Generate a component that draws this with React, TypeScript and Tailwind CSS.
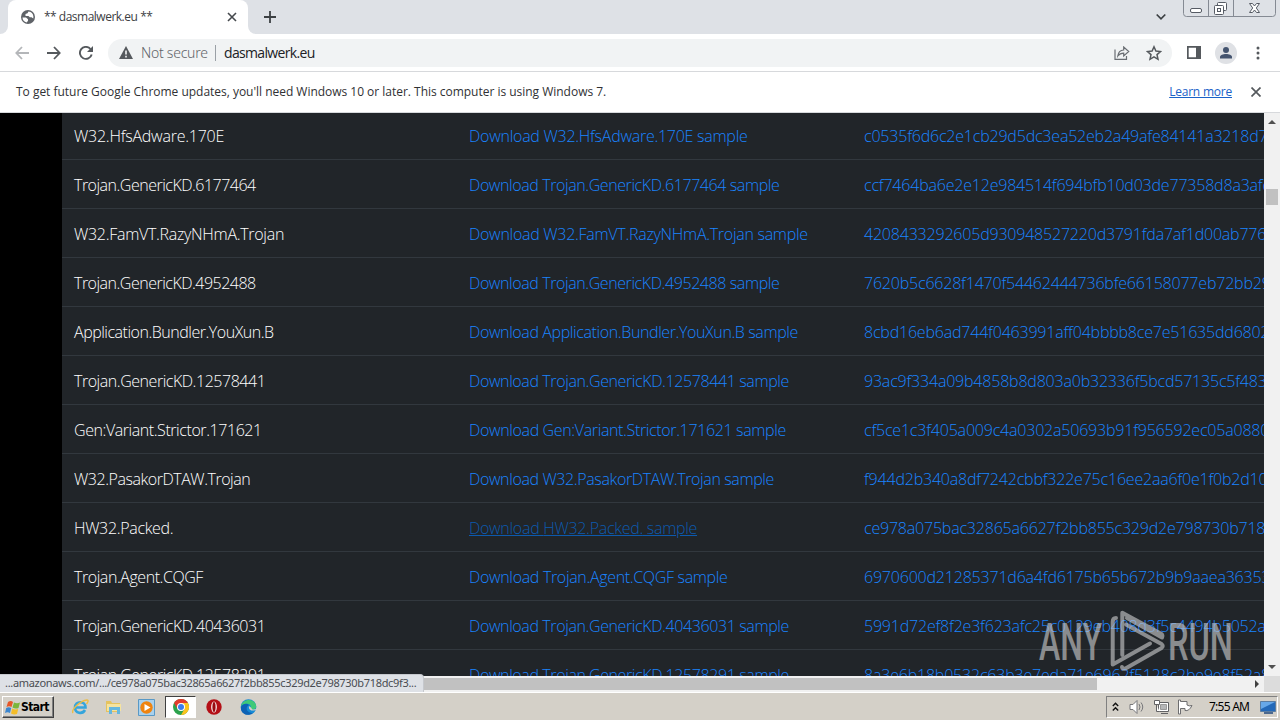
import React from "react";

type Row = { name: string; hash: string; nameTracking: string; linkTracking: string; hovered?: boolean };

const rows: Row[] = [
  { name: "W32.HfsAdware.170E", hash: "c0535f6d6c2e1cb29d5dc3ea52eb2a49afe84141a3218d7", nameTracking: "tracking-[-0.24px]", linkTracking: "tracking-[-0.26px]" },
  { name: "Trojan.GenericKD.6177464", hash: "ccf7464ba6e2e12e984514f694bfb10d03de77358d8a3afc", nameTracking: "tracking-[-0.5px]", linkTracking: "tracking-[-0.41px]" },
  { name: "W32.FamVT.RazyNHmA.Trojan", hash: "4208433292605d930948527220d3791fda7af1d00ab776", nameTracking: "tracking-[-0.29px]", linkTracking: "tracking-[-0.28px]" },
  { name: "Trojan.GenericKD.4952488", hash: "7620b5c6628f1470f54462444736bfe66158077eb72bb29", nameTracking: "tracking-[-0.5px]", linkTracking: "tracking-[-0.41px]" },
  { name: "Application.Bundler.YouXun.B", hash: "8cbd16eb6ad744f0463991aff04bbbb8ce7e51635dd6802", nameTracking: "tracking-[-0.48px]", linkTracking: "tracking-[-0.39px]" },
  { name: "Trojan.GenericKD.12578441", hash: "93ac9f334a09b4858b8d803a0b32336f5bcd57135c5f483", nameTracking: "tracking-[-0.46px]", linkTracking: "tracking-[-0.39px]" },
  { name: "Gen:Variant.Strictor.171621", hash: "cf5ce1c3f405a009c4a0302a50693b91f956592ec05a0880", nameTracking: "tracking-[-0.43px]", linkTracking: "tracking-[-0.36px]" },
  { name: "W32.PasakorDTAW.Trojan", hash: "f944d2b340a8df7242cbbf322e75c16ee2aa6f0e1f0b2d10", nameTracking: "tracking-[-0.46px]", linkTracking: "tracking-[-0.38px]" },
  { name: "HW32.Packed.", hash: "ce978a075bac32865a6627f2bb855c329d2e798730b718", nameTracking: "tracking-[-0.33px]", linkTracking: "tracking-[-0.29px]", hovered: true },
  { name: "Trojan.Agent.CQGF", hash: "6970600d21285371d6a4fd6175b65b672b9b9aaea36353", nameTracking: "tracking-[-0.44px]", linkTracking: "tracking-[-0.33px]" },
  { name: "Trojan.GenericKD.40436031", hash: "5991d72ef8f2e3f623afc25c0129eb408d3f5c4494b5052a", nameTracking: "tracking-[-0.46px]", linkTracking: "tracking-[-0.39px]" },
  { name: "Trojan.GenericKD.12578291", hash: "8a3e6b18b0532c63b3e7eda71e6962f5128c2be9e8f52a8", nameTracking: "tracking-[-0.46px]", linkTracking: "tracking-[-0.39px]" },
];

function TabStrip() {
  return (
    <div className="relative flex h-[34px] shrink-0 bg-[#dee1e6]">
      <div className="flex w-2 items-end bg-white">
        <div className="h-full w-full rounded-br-lg bg-[#dee1e6]" />
      </div>
      <div className="flex w-60 items-center rounded-t-lg bg-white pl-[13px]">
        <svg width="14" height="14" viewBox="0 0 14 14">
          <circle cx="7" cy="7" r="7" fill="#5f6368" />
          <path d="M1.5 7.5H5l2 1.7v1.5l-1.3 1.8C3.2 12 1.5 10 1.5 7.5ZM7.5 1.4l-1 1.8-2 .7V6h3l1.3 1.3h1.7l1.8 1.2c.6-2.8-.7-5.3-2.8-6.4Z" fill="#fff" />
        </svg>
        <span className="ml-[9px] flex w-[183px] gap-[3px] font-['Open_Sans','Noto_Sans',sans-serif] text-[12px] text-[#3c4043]">
          <span className="tracking-[-0.7px]">**</span>
          <span className="tracking-[-0.5px]">dasmalwerk.eu</span>
          <span className="tracking-[-0.7px]">**</span>
        </span>
        <svg width="10" height="10" viewBox="0 0 10 10" stroke="#45494d" strokeWidth="1.6">
          <path d="m1 1 8 8M9 1 1 9" />
        </svg>
      </div>
      <div className="flex w-2 bg-white">
        <div className="h-full w-full rounded-bl-lg bg-[#dee1e6]" />
      </div>
      <svg className="ml-2 mt-[11px]" width="12" height="12" viewBox="0 0 12 12" stroke="#3c4043" strokeWidth="1.8">
        <path d="M6 0v12M0 6h12" />
      </svg>
      <svg className="ml-auto mt-[13px] mr-[17px]" width="10" height="8" viewBox="0 0 10 8" fill="none" stroke="#3c4043" strokeWidth="1.7">
        <path d="m.7 1.5 4.3 4.3 4.3-4.3" />
      </svg>
      <svg className="mr-1" width="93" height="17" viewBox="0 0 93 17" fill="none">
        <path d="M.5 0v13.5a3 3 0 0 0 3 3h86a3 3 0 0 0 3-3V0M25.500 0v16.500M50.500 0v16.500" stroke="#858a93" />
        <rect x="7.500" y="8.500" width="11" height="4" rx="1.500" fill="#fff" stroke="#565b64" />
        <g stroke="#565b64">
          <rect x="34.500" y="2.500" width="9" height="8" rx="1" fill="#fff" />
          <rect x="31.500" y="5.500" width="9" height="9" rx="1" fill="#fff" />
          <rect x="34.500" y="8.500" width="3" height="3" />
        </g>
        <path d="M66.500 3.500h3l2 2.500 2-2.500h3L73.300 8l3.200 4.500h-3l-2-2.500-2 2.500h-3L69.700 8Z" fill="#fff" stroke="#565b64" />
      </svg>
    </div>
  );
}

function Toolbar() {
  return (
    <div className="flex h-[38px] shrink-0 items-center border-b border-[#d7d9dc] bg-white">
      <svg className="ml-[15px]" width="14" height="14" viewBox="0 0 14 14" fill="none" stroke="#b4b6b9" strokeWidth="1.8">
        <path d="M14 7H1.500M7 1 1.300 7 7 13" />
      </svg>
      <svg className="ml-[18px]" width="14" height="14" viewBox="0 0 14 14" fill="none" stroke="#55595d" strokeWidth="1.8">
        <path d="M0 7h12.500M7 1l5.700 6L7 13" />
      </svg>
      <svg className="ml-[18px]" width="14" height="14" viewBox="0 0 14 14" fill="none" stroke="#55595d" strokeWidth="1.900">
        <path d="M12.700 8.500A6 6 0 1 1 11.500 3" />
        <path d="M14 0v6H8l2.200-2.200Z" fill="#55595d" stroke="none" />
      </svg>
      <div className="ml-[15px] flex h-7 w-[1064px] items-center rounded-full bg-[#f1f3f4] pl-[11px]">
        <svg width="14" height="13" viewBox="0 0 14 13">
          <path d="M7 0 14 13H0Z" fill="#55595d" />
          <path d="M7 4.500v4M7 9.800v1.600" stroke="#fff" strokeWidth="1.500" />
        </svg>
        <span className="ml-2 w-[74px] whitespace-nowrap text-[14px] font-light tracking-[-0.25px] text-[#5f6368]">Not secure</span>
        <span className="h-4 w-px bg-[#9aa0a6]" />
        <span className="ml-2 font-['Open_Sans','Noto_Sans',sans-serif] text-[14px] tracking-[-0.66px] text-[#202124]">dasmalwerk.eu</span>
        <svg className="ml-auto" width="16" height="14" viewBox="0 0 16 14" fill="none" stroke="#6a6e73" strokeWidth="1.200">
          <path d="M1 3.500v9.800h11.500V10" />
          <path d="M3.800 10C4.200 6.500 6 4.200 9.700 4V1l5 4.500-5 4.500V7.200C7 7.200 5.300 8 3.800 10Z" />
        </svg>
        <svg className="ml-4 mr-[10px]" width="16" height="16" viewBox="0 0 16 16" fill="none" stroke="#55595d" strokeWidth="1.500">
          <path d="m8 1.800 1.900 4.300 4.600.4L11 9.600l1 4.700-4-2.500-4 2.500 1-4.700-3.500-3.100 4.600-.4Z" />
        </svg>
      </div>
      <svg className="ml-[15px]" width="14" height="13" viewBox="0 0 14 13">
        <path d="M0 0h14v13H0ZM1.700 1.700v9.600H9V1.700Z" fill="#55595d" fillRule="evenodd" />
      </svg>
      <svg className="ml-[14px]" width="22" height="22" viewBox="0 0 22 22">
        <circle cx="11" cy="11" r="11" fill="#dfe1e5" />
        <circle cx="11" cy="8" r="3" fill="#44546f" />
        <path d="M5 16.500V15c0-2 3-3 6-3s6 1 6 3v1.500Z" fill="#44546f" />
      </svg>
      <svg className="ml-[19px]" width="4" height="14" viewBox="0 0 4 14" fill="#55595d">
        <circle cx="2" cy="2" r="1.500" />
        <circle cx="2" cy="7" r="1.500" />
        <circle cx="2" cy="12" r="1.500" />
      </svg>
    </div>
  );
}

function InfoBar() {
  return (
    <div className="flex h-[41px] shrink-0 items-center border-b border-[#d7d9dc] bg-white pl-4 pr-[19px] font-['Open_Sans','Noto_Sans',sans-serif] text-[12px] text-[#303134]">
      <span className="tracking-[-0.02px]">To get future Google Chrome updates, you'll need Windows 10 or later. This computer is using Windows 7.</span>
      <span className="ml-auto tracking-[-0.22px] text-[#1a62c8] underline">Learn more</span>
      <svg className="ml-[19px]" width="10" height="10" viewBox="0 0 10 10" stroke="#55595d" strokeWidth="1.700">
        <path d="m.5.5 9 9M9.500.5l-9 9" />
      </svg>
    </div>
  );
}

function SampleTable() {
  return (
    <div className="flex min-w-0 flex-1 overflow-hidden bg-black pl-[62px]">
      <div className="-mt-0.5 min-w-0 flex-1">
        {rows.map((row) => (
          <div
            key={row.name}
            className="grid h-[49px] grid-cols-[395px_395px_1fr] items-center whitespace-nowrap border-b border-[#32383e] bg-[#212529] pt-px font-['Open_Sans','Noto_Sans',sans-serif] text-[16px] font-light"
          >
            <span className={`pl-3 text-white ${row.nameTracking}`}>{row.name}</span>
            <span className={`pl-3 ${row.linkTracking} ${row.hovered ? "text-[#0c5aae] underline" : "text-[#1a84ff]"}`}>
              Download {row.name} sample
            </span>
            <span className="overflow-hidden pl-3 tracking-[-0.2px] text-[#1a84ff]">{row.hash}</span>
          </div>
        ))}
      </div>
    </div>
  );
}

function VerticalScrollbar() {
  return (
    <div className="flex w-4 flex-col items-center bg-[#f1f1f1]">
      <svg className="mt-[7px]" width="8" height="4" viewBox="0 0 8 4"><path d="M4 0 8 4H0Z" fill="#505050" /></svg>
      <div className="mt-[65px] h-4 w-3 bg-[#c1c1c1]" />
      <svg className="mt-auto mb-[7px]" width="8" height="4" viewBox="0 0 8 4"><path d="M0 0h8L4 4Z" fill="#505050" /></svg>
    </div>
  );
}

function Watermark() {
  return (
    <svg className="absolute left-[1036px] top-[606px] opacity-65" width="200" height="70" viewBox="0 0 200 70" fill="none">
      <g fill="#c2c3c4" fontFamily="Roboto, sans-serif" fontSize="51" fontWeight="500">
        <text x="3" y="53.500" textLength="63" lengthAdjust="spacingAndGlyphs">ANY</text>
        <text x="132" y="53.500" textLength="65" lengthAdjust="spacingAndGlyphs">RUN</text>
      </g>
      <g stroke="#c2c3c4" strokeWidth="4" strokeLinecap="round" strokeLinejoin="round">
        <path d="M80 12q-3.300 0-3.300 4v42.500L114 37.500" />
        <path d="M86.300 49V6.700L125.500 28q1.500 1.500.5 3.500L91 12" />
        <path d="M90 18.500 125.500 38q2.500 2 0 4L89.500 62.500q-3 1-3.500-1.500" />
      </g>
    </svg>
  );
}

function QuickLaunch() {
  return (
    <div className="flex items-center">
      <svg width="18" height="18" viewBox="0 0 18 18" fill="none">
        <path d="M4 9.500h10.500c0-7-10.500-7-10.500 0 0 6 7.500 7 10 2.500" stroke="#35a5dc" strokeWidth="2.600" />
        <path d="M2 15C0 12 9 2.500 16 2c2 0 .8 2.500-.5 4" stroke="#edbd43" strokeWidth="1.400" />
      </svg>
      <svg className="ml-4" width="18" height="18" viewBox="0 0 18 18">
        <path d="M1 3h5l1 2h8v9H1Z" fill="#e5c35f" />
        <path d="M2 6h14v7H2Z" fill="#f5e39f" />
        <path d="M4 16V9h11v7h-3v-4H7v4Z" fill="#65b7df" />
      </svg>
      <svg className="ml-[15px]" width="17" height="17" viewBox="0 0 17 17">
        <path d="M.5.500h16v16H.500Z" fill="#a9d1ed" stroke="#5999c6" />
        <circle cx="8.500" cy="8.500" r="6.200" fill="#ef8410" />
        <path d="m6.500 5 6 3.500-6 3.500Z" fill="#fff" />
      </svg>
      <div className="ml-[10px] flex h-[22px] w-[31px] items-center justify-center border border-b-white border-l-[#404040] border-r-white border-t-[#404040] bg-white">
        <svg width="16" height="16" viewBox="0 0 16 16">
          <circle cx="8" cy="8" r="8" fill="#2ba24c" />
          <path d="M1.070 4A8 8 0 0 1 14.930 4H8L4.540 10Z" fill="#e33b2e" />
          <path d="M14.930 4A8 8 0 0 1 8 16l3.460-6L8 4Z" fill="#fcc31e" />
          <circle cx="8" cy="8" r="4" fill="#fff" />
          <circle cx="8" cy="8" r="3" fill="#3b7ded" />
        </svg>
      </div>
      <svg className="ml-[10px]" width="16" height="16" viewBox="0 0 16 16">
        <circle cx="8" cy="8" r="7.700" fill="#b40f16" />
        <ellipse cx="8" cy="8" rx="2.800" ry="5.600" fill="#fff" />
        <ellipse cx="8" cy="8" rx="1.600" ry="5" fill="#98090f" />
      </svg>
      <svg className="ml-[18px]" width="17" height="16" viewBox="0 0 17 16">
        <circle cx="8.500" cy="8" r="7.800" fill="#158ad5" />
        <path d="M1 7C3-1 15-1 16.200 7c.3 4-5 4.500-5.700 2.500C12 5 7 3 1 7Z" fill="#3fc978" />
        <path d="M1 8c2-4 6-4 8-2-4 2-3 8 4 8C8 18 0 15 1 8Z" fill="#0d62b5" />
        <path d="M9 7c-1 4 3 5.500 6.500 4l2 1V9c-2 2-6 2-6 0Z" fill="#d4d0c8" />
      </svg>
    </div>
  );
}

function Tray() {
  return (
    <div className="ml-auto mr-0.5 flex h-[22px] w-[172px] items-center border border-b-white border-l-[#808080] border-r-white border-t-[#808080]">
      <svg className="ml-[5px]" width="7" height="10" viewBox="0 0 7 10" fill="none" stroke="#111" strokeWidth="1.400">
        <path d="m.8 4 2.700-2.700L6.200 4M.8 8.500l2.700-2.700 2.700 2.700" />
      </svg>
      <svg className="ml-[10px]" width="16" height="16" viewBox="0 0 16 16" fill="none" stroke="#77777a">
        <path d="M1 5.500h3l4-4v13l-4-4H1Z" fill="#fff" />
        <path d="M10 5q2 3 0 6M12 3.500q3.500 4.500 0 9" />
      </svg>
      <svg className="ml-2" width="17" height="16" viewBox="0 0 17 16" fill="none" stroke="#626264">
        <path d="M5.500 3.500h10v9h-10Z" fill="#fff" />
        <path d="M7.500 5.500h6v5h-6Z" fill="#b6b7b8" stroke="#999" />
        <path d="M8 14.500h7M1.500 1.500h5v4h-5ZM3.500 5.500v7h3" fill="#fff" />
      </svg>
      <svg className="ml-[7px]" width="17" height="16" viewBox="0 0 17 16">
        <path d="M1.500 1v14h2V9.500H8v2q4 1 7-5-3 1-5-.5V2.500H3.500V1Z" fill="#fff" stroke="#6d6d6f" />
      </svg>
      <span className="ml-[15px] w-[41px] whitespace-nowrap text-[12px] tracking-[-0.75px] text-black">7:55 AM</span>
      <svg className="ml-[10px]" width="16" height="15" viewBox="0 0 16 15">
        <path d="M.5 1.500h15v10H.500Z" fill="#2469b8" stroke="#5b7da1" />
        <path d="M1 2h14L1 9Z" fill="#67a8e8" />
        <path d="M4 13h9" stroke="#1f477d" strokeWidth="1.500" />
      </svg>
    </div>
  );
}

function Taskbar() {
  return (
    <div className="flex h-7 shrink-0 items-center border-t border-white bg-[#d4d0c8] pt-px">
      <div className="ml-0.5 mr-[17px] flex h-[22px] w-[52px] items-center border border-b-[#404040] border-l-white border-r-[#404040] border-t-white pl-0.5 shadow-[inset_-1px_-1px_0_#808080]">
        <svg width="16" height="15" viewBox="0 0 16 15">
          <path d="M3 2q3-2 5 0L6.500 7Q4 5.500 1.500 7Z" fill="#e75728" />
          <path d="M9 2.500q3 1.500 6 0L13.500 8q-3 1.300-6-.5Z" fill="#7bb63a" />
          <path d="M1.200 8q2.600-1.500 5 0L5 13q-2.500-1.500-5 0Z" fill="#3b86cf" />
          <path d="M7.200 8.500q3 1.500 6 .5L12 14q-3 1-6-.5Z" fill="#f4bd29" />
        </svg>
        <span className="font-['DejaVu_Sans_Condensed','DejaVu_Sans',sans-serif] text-[12px] font-bold tracking-[-0.6px] text-black">Start</span>
      </div>
      <QuickLaunch />
      <Tray />
    </div>
  );
}

export default function App() {
  return (
    <div className="relative flex h-[720px] w-[1280px] flex-col overflow-hidden bg-white font-['Noto_Sans',sans-serif]">
      <TabStrip />
      <Toolbar />
      <InfoBar />
      <div className="flex h-[563px] shrink-0">
        <SampleTable />
        <VerticalScrollbar />
      </div>
      <div className="flex h-4 shrink-0 bg-[#f1f1f1]">
        <div className="my-0.5 w-[1097px] bg-[#c1c1c1]" />
        <div className="flex flex-1 items-center justify-end pr-[5px]">
          <svg width="4" height="8" viewBox="0 0 4 8"><path d="m0 0 4 4-4 4Z" fill="#404040" /></svg>
        </div>
        <div className="w-4 bg-[#dcdcdc]" />
      </div>
      <Taskbar />
      <div className="absolute left-0 top-[674px] flex h-[18px] w-[424px] items-center overflow-hidden whitespace-nowrap rounded-tr border-r border-t border-[#c5c8cd] bg-[#dee1e6] pl-[5px] text-[11px] tracking-[-0.32px] text-[#4a4d52]">
        ...amazonaws.com/.../ce978a075bac32865a6627f2bb855c329d2e798730b718dc9f3...
      </div>
      <Watermark />
    </div>
  );
}
